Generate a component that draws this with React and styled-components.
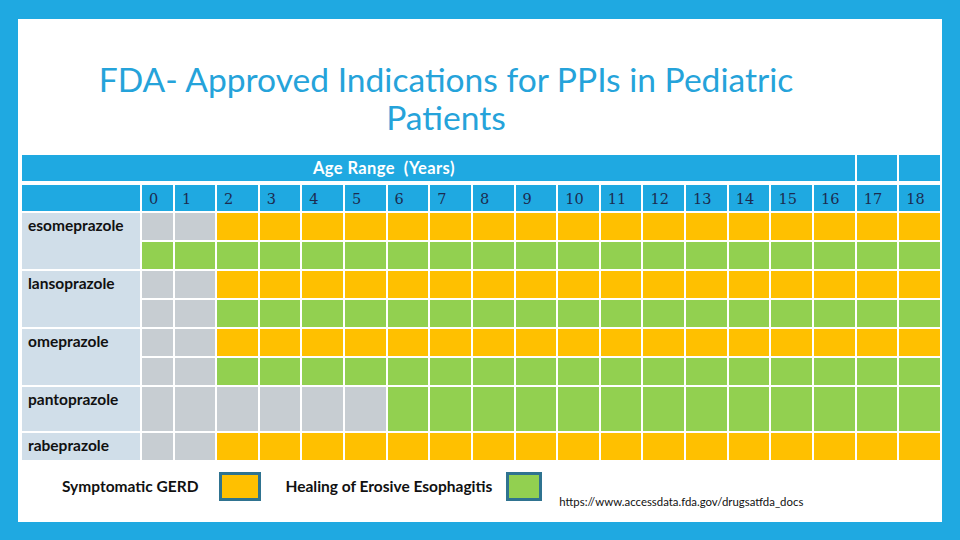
import React from "react";
import styled, { createGlobalStyle } from "styled-components";

const GlobalStyle = createGlobalStyle`
  html, body {
    margin: 0;
    padding: 0;
  }
  body {
    background: #1fa9e1;
    font-family: Lato, "Liberation Sans", sans-serif;
  }
`;

const COLORS = {
  gray: "#c7cdd2",
  orange: "#ffc000",
  green: "#92d050",
};

const ages = Array.from({ length: 19 }, (_, i) => i);

const makeRow = (grayCount, color) =>
  ages.map((a) => (a < grayCount ? "gray" : color));

const drugs = [
  {
    name: "esomeprazole",
    rows: [makeRow(2, "orange"), makeRow(0, "green")],
  },
  {
    name: "lansoprazole",
    rows: [makeRow(2, "orange"), makeRow(2, "green")],
  },
  {
    name: "omeprazole",
    rows: [makeRow(2, "orange"), makeRow(2, "green")],
  },
  {
    name: "pantoprazole",
    rows: [makeRow(6, "green")],
  },
  {
    name: "rabeprazole",
    rows: [makeRow(2, "orange")],
  },
];

const App = () => {
  return (
    <>
      <GlobalStyle />
      <Slide>
        <Title>
          FDA- Approved Indications for PPIs in Pediatric
          <br />
          Patients
        </Title>

        <Grid>
          <HeaderCell $span={18}>Age Range&nbsp; (Years)</HeaderCell>
          <HeaderCell />
          <HeaderCell />

          <AgeCell />
          {ages.map((a) => (
            <AgeCell key={a}>{a}</AgeCell>
          ))}

          {drugs.map((d) => (
            <React.Fragment key={d.name}>
              <DrugLabel $rows={d.rows.length}>{d.name}</DrugLabel>
              {d.rows.map((row, ri) =>
                row.map((c, ci) => (
                  <Cell key={`${ri}-${ci}`} $color={COLORS[c]} />
                ))
              )}
            </React.Fragment>
          ))}
        </Grid>

        <Legend>
          <LegendText $after={21}>Symptomatic GERD</LegendText>
          <Swatch $color={COLORS.orange} $w={42} />
          <LegendText $before={24} $after={14}>
            Healing of Erosive Esophagitis
          </LegendText>
          <Swatch $color={COLORS.green} $w={36} />
          <Source>https://www.accessdata.fda.gov/drugsatfda_docs</Source>
        </Legend>
      </Slide>
    </>
  );
};

const Slide = styled.div`
  margin: 19px 18px 0;
  width: 924px;
  height: 503px;
  box-sizing: border-box;
  padding: 0 2px 0 4px;
  background: #ffffff;
  display: flex;
  flex-direction: column;
`;

const Title = styled.h1`
  margin: 41px 70px 19px 0;
  font-family: Lato, "Liberation Sans", sans-serif;
  font-weight: 400;
  font-size: 33.6px;
  line-height: 38px;
  color: #25a3da;
  text-align: center;
`;

const Grid = styled.div`
  display: grid;
  grid-template-columns: 118px 31px 40px repeat(17, 1fr);
  grid-template-rows: 28px 26px repeat(6, 27px) 44px 27px;
  gap: 2px;
`;

const HeaderCell = styled.div`
  grid-column: span ${(p) => p.$span || 1};
  height: 26px;
  background: #1fa9e1;
  color: #ffffff;
  font-weight: 700;
  font-size: 16.5px;
  letter-spacing: 0.4px;
  line-height: 26px;
  padding-left: ${(p) => (p.$span ? "291px" : "0")};
`;

const AgeCell = styled.div`
  background: #1fa9e1;
  color: #1c2b4f;
  font-family: "DejaVu Serif", "Liberation Serif", serif;
  font-size: 14.5px;
  line-height: 28px;
  padding-left: 7px;
`;

const DrugLabel = styled.div`
  grid-column: 1;
  grid-row: span ${(p) => p.$rows};
  background: #d0dee9;
  color: #111;
  font-weight: 700;
  font-size: 15.5px;
  line-height: 18px;
  padding: 3px 0 0 6px;
`;

const Cell = styled.div`
  background: ${(p) => p.$color};
`;

const Legend = styled.div`
  display: flex;
  align-items: flex-start;
  margin-top: 12px;
  padding-left: 40px;
`;

const LegendText = styled.div`
  margin-left: ${(p) => p.$before || 0}px;
  margin-right: ${(p) => p.$after || 0}px;
  font-weight: 700;
  font-size: 15.5px;
  line-height: 29px;
  color: #111;
`;

const Swatch = styled.div`
  width: ${(p) => p.$w}px;
  height: 29px;
  box-sizing: border-box;
  border: 3px solid #2f7390;
  background: ${(p) => p.$color};
`;

const Source = styled.div`
  margin: 23px 0 0 17px;
  font-size: 11.4px;
  line-height: 14px;
  color: #111;
`;

export default App;
